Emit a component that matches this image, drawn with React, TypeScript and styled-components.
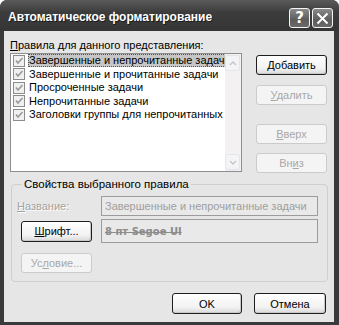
import React from "react";
import styled, { createGlobalStyle } from "styled-components";

const Global = createGlobalStyle`
  html, body { margin: 0; padding: 0; background: #ffffff; }
  body { font-family: "Liberation Sans", Arial, sans-serif; font-size: 11px; color: #000; }
`;

const Window = styled.div`
  width: 339px;
  height: 325px;
  box-sizing: border-box;
  background: #3a3a3a;
  border-radius: 7px 7px 0 0;
  display: flex;
  flex-direction: column;
  padding: 0 5px 3px 4px;
`;

const TitleBar = styled.div`
  height: 31px;
  display: flex;
  align-items: center;
  background: linear-gradient(#5a5a5a, #3c3c3c 40%, #353535);
  margin: 0 -5px 0 -4px;
  padding-left: 8px;
  padding-right: 6px;
  border-radius: 7px 7px 0 0;
`;

const Title = styled.div`
  flex: 1;
  color: #fff;
  font-family: "Liberation Sans", Arial, sans-serif;
  font-weight: bold;
  font-size: 12px;
  text-shadow: 1px 1px 0 #1a1a1a;
  padding-top: 3px;
`;

const TitleButton = styled.div`
  width: 21px;
  height: 20px;
  box-sizing: border-box;
  margin-top: 5px;
  margin-left: 2px;
  border: 1px solid #f4f4f4;
  border-radius: 3px;
  background: linear-gradient(#8a8a8a, #5c5c5c 60%, #6a6a6a);
  display: flex;
  align-items: center;
  justify-content: center;
  color: #fff;
  font-family: "DejaVu Sans", sans-serif;
  font-weight: bold;
  font-size: 15px;
`;

const Body = styled.div`
  flex: 1;
  background: #e6e6e6;
  padding: 6px 7px 8px 6px;
  display: flex;
  flex-direction: column;
`;

const Label = styled.div<{ $disabled?: boolean }>`
  height: 16px;
  line-height: 16px;
  white-space: nowrap;
  color: ${(p) => (p.$disabled ? "#a2a2a2" : "#000")};
  text-shadow: ${(p) => (p.$disabled ? "1px 1px 0 #ffffff" : "none")};
`;

const TopRow = styled.div`
  display: flex;
  align-items: flex-start;
`;

const ListBox = styled.div`
  width: 232px;
  height: 119px;
  box-sizing: border-box;
  border: 1px solid #8e8e8e;
  background: #fff;
  display: flex;
  overflow: hidden;
`;

const Rows = styled.div`
  flex: 1;
  min-width: 0;
  overflow: hidden;
`;

const Row = styled.div`
  height: 13.5px;
  display: flex;
  align-items: center;
  padding-left: 2px;
  white-space: nowrap;

  svg {
    flex-shrink: 0;
  }
`;

const RowText = styled.span<{ $selected?: boolean }>`
  margin-left: 3px;
  padding: 0 1px;
  line-height: 13px;
  flex: 1 0 auto;
  background: ${(p) => (p.$selected ? "#c6c6c6" : "transparent")};
  outline: ${(p) => (p.$selected ? "1px dotted #555" : "none")};
  outline-offset: -1px;
`;

const Scrollbar = styled.div`
  width: 15px;
  flex-shrink: 0;
  background: #f3f1f1;
  display: flex;
  flex-direction: column;
  justify-content: space-between;
  padding: 1px 1px 1px 0;
`;

const ScrollArrow = styled.div`
  height: 14px;
  border: 1px solid #e4e4ea;
  border-radius: 2px;
  background: #f4f4f6;
  display: flex;
  align-items: center;
  justify-content: center;
`;

const SideButtons = styled.div`
  margin-left: auto;
  padding-top: 2px;
  display: flex;
  flex-direction: column;
  width: 71px;
`;

const Button = styled.button<{ $gap?: number; $w?: number; $h?: number }>`
  width: ${(p) => p.$w ?? 71}px;
  height: ${(p) => p.$h ?? 20}px;
  margin-top: ${(p) => p.$gap ?? 0}px;
  box-sizing: border-box;
  border: 1px solid #1e1e1e;
  border-radius: 3px;
  background: linear-gradient(#ffffff, #f2f2f2 70%, #d8d8d8);
  font-family: "Liberation Sans", Arial, sans-serif;
  font-size: 11px;
  color: #000;
  padding: 0;
  box-shadow: inset -1px -1px 0 #c8c8c8;

  &:disabled {
    border-color: #cbcbcb;
    background: #f4f4f4;
    color: #a8a8a8;
    box-shadow: none;
  }
`;

const Group = styled.fieldset`
  margin: 4px -1px 0 1px;
  padding: 5px 9px 8px 5px;
  border: 1px solid #cfcfcf;
  border-radius: 4px;
  min-width: 0;
  display: grid;
  grid-template-columns: 84px 1fr;
  row-gap: 3px;
  align-items: center;
`;

const Legend = styled.legend`
  padding: 0 2px;
  margin-left: 5px;
  line-height: 14px;
  font-size: 11.5px;
`;

const Field = styled.div<{ $h: number }>`
  height: ${(p) => p.$h}px;
  box-sizing: border-box;
  border: 1px solid #9c9c9c;
  background: #e9e9e9;
  padding-left: 3px;
  display: flex;
  align-items: center;
  color: #9e9e9e;
  white-space: nowrap;
  overflow: hidden;
`;

const FontPreview = styled.span`
  font-family: "DejaVu Sans", sans-serif;
  font-weight: bold;
  font-size: 10px;
  color: #8c8c8c;
  text-decoration: line-through;
`;

const GroupButton = styled.div<{ $top?: number }>`
  padding-left: 4px;
  margin-top: ${(p) => p.$top ?? 0}px;
`;

const Footer = styled.div`
  margin-top: auto;
  display: flex;
  justify-content: flex-end;
  gap: 12px;
  padding-right: 1px;
`;

function Check() {
  return (
    <svg width="12" height="12" viewBox="0 0 12 12">
      <rect x="0.5" y="0.5" width="11" height="11" fill="#f0f0f0" stroke="#8c8c8c" />
      <path d="M3 5.5 L5 8 L9.5 3" stroke="#9a9a9a" strokeWidth="1.6" fill="none" />
    </svg>
  );
}

function Arrow({ down }: { down?: boolean }) {
  return (
    <svg width="8" height="5" viewBox="0 0 8 5">
      <path d={down ? "M1 1 L4 4 L7 1" : "M1 4 L4 1 L7 4"} stroke="#c4c4cc" strokeWidth="1.4" fill="none" />
    </svg>
  );
}

const rules = [
  "Завершенные и непрочитанные задачи",
  "Завершенные и прочитанные задачи",
  "Просроченные задачи",
  "Непрочитанные задачи",
  "Заголовки группы для непрочитанных",
];

export default function App() {
  return (
    <>
      <Global />
      <Window>
        <TitleBar>
          <Title>Автоматическое форматирование</Title>
          <TitleButton>?</TitleButton>
          <TitleButton>
            <svg width="13" height="13" viewBox="0 0 13 13">
              <path d="M1.5 1.5 L11.5 11.5 M11.5 1.5 L1.5 11.5" stroke="#fff" strokeWidth="2" />
            </svg>
          </TitleButton>
        </TitleBar>
        <Body>
          <Label>
            <u>П</u>равила для данного представления:
          </Label>
          <TopRow>
            <ListBox>
              <Rows>
                {rules.map((r, i) => (
                  <Row key={r}>
                    <Check />
                    <RowText $selected={i === 0}>{r}</RowText>
                  </Row>
                ))}
              </Rows>
              <Scrollbar>
                <ScrollArrow>
                  <Arrow />
                </ScrollArrow>
                <ScrollArrow>
                  <Arrow down />
                </ScrollArrow>
              </Scrollbar>
            </ListBox>
            <SideButtons>
              <Button>
                <u>Д</u>обавить
              </Button>
              <Button $gap={10} disabled>
                <u>У</u>далить
              </Button>
              <Button $gap={19} disabled>
                <u>В</u>верх
              </Button>
              <Button $gap={9} disabled>
                Вн<u>и</u>з
              </Button>
            </SideButtons>
          </TopRow>
          <Group>
            <Legend>Свойства выбранного правила</Legend>
            <Label $disabled>
              <u>Н</u>азвание:
            </Label>
            <Field $h={20}>Завершенные и непрочитанные задачи</Field>
            <GroupButton>
              <Button $h={21}>
                <u>Ш</u>рифт...
              </Button>
            </GroupButton>
            <Field $h={24}>
              <FontPreview>8 пт Segoe UI</FontPreview>
            </Field>
            <GroupButton $top={7}>
              <Button disabled>
                Ус<u>л</u>овие...
              </Button>
            </GroupButton>
          </Group>
          <Footer>
            <Button $w={70} $h={21}>OK</Button>
            <Button $w={72} $h={21}>Отмена</Button>
          </Footer>
        </Body>
      </Window>
    </>
  );
}
